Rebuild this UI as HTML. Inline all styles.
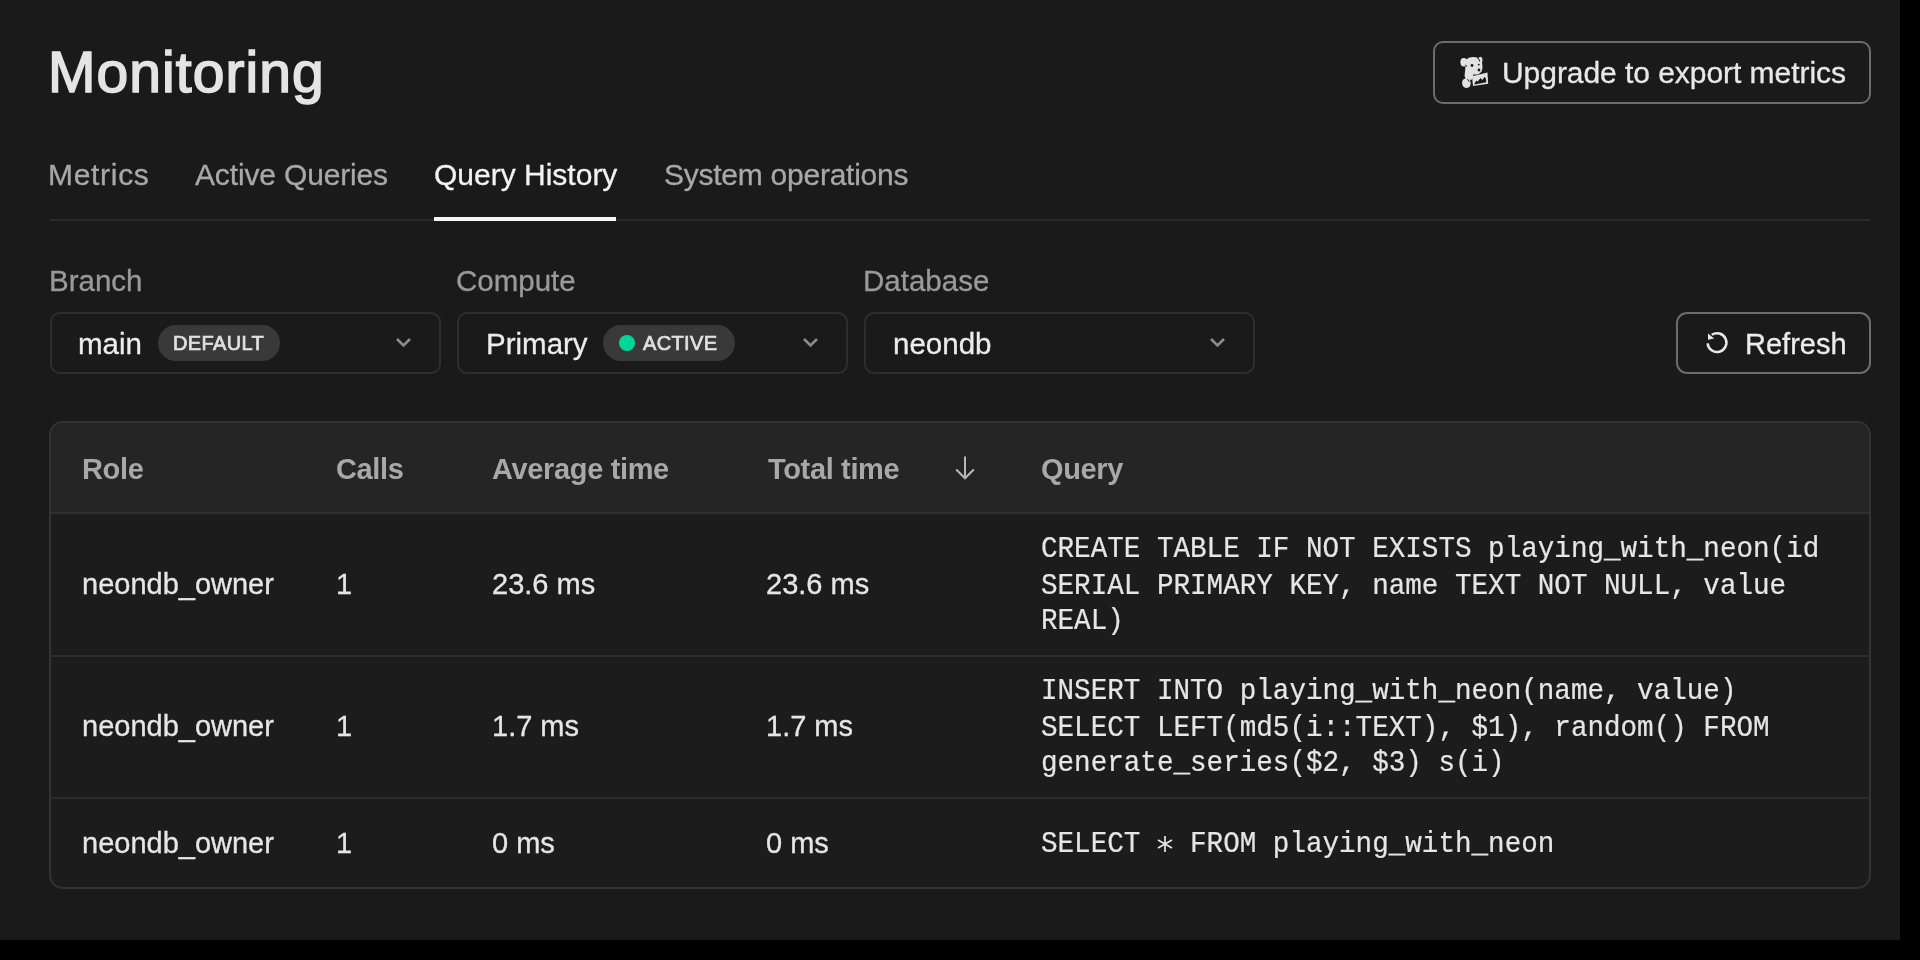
<!DOCTYPE html>
<html><head><meta charset="utf-8">
<style>
*{box-sizing:border-box;margin:0;padding:0}
html,body{width:1920px;height:960px;background:#000;overflow:hidden}
body{font-family:"Liberation Sans",sans-serif;color:#e4e4e4}
.page{position:absolute;left:0;top:0;width:1900px;height:940px;background:#1a1a1a}
.abs{position:absolute;white-space:nowrap;will-change:transform}
.title{left:48px;top:36.8px;font-size:57px;line-height:70px;color:#e4e4e4;letter-spacing:1.05px;-webkit-text-stroke:1.6px #e4e4e4}
.upg{left:1433px;top:41px;width:438px;height:63px;border:2px solid #6c6c6c;border-radius:10px}
.upg .txt{left:67px;top:11.5px;font-size:30px;line-height:36px;color:#e8e8e8;letter-spacing:-0.05px;-webkit-text-stroke:0.3px #e8e8e8}
.tab{top:157px;font-size:30px;line-height:36px;color:#a8a8a8;-webkit-text-stroke:0.3px #a8a8a8}
.tab.on{color:#f2f2f2;-webkit-text-stroke:0.3px #f2f2f2}
.tabline{left:50px;top:219px;width:1820px;height:2px;background:#2b2b2b}
.tabul{left:434px;top:217px;width:182px;height:4px;background:#f5f5f5}
.lbl{top:263px;font-size:29.5px;line-height:36px;color:#9a9a9a;-webkit-text-stroke:0.3px #9a9a9a}
.sel{top:312px;width:391px;height:62px;border:2px solid #2e2e2e;border-radius:10px}
.sel .v{left:27px;top:11.5px;font-size:29.5px;line-height:36px;color:#ececec;-webkit-text-stroke:0.3px #ececec}
.badge{top:11px;height:36px;border-radius:18px;background:#393939}
.btxt{font-size:20px;line-height:24px;color:#e0e0e0;letter-spacing:0.35px;-webkit-text-stroke:0.7px #e0e0e0;top:16.5px}
.chev{left:343px;top:23px}
.refresh{left:1676px;top:312px;width:195px;height:62px;border:2px solid #6c6c6c;border-radius:11px}
.tbl{left:49px;top:421px;width:1822px;height:468px;border:2px solid #333;border-radius:14px;background:#1c1c1c;overflow:hidden}
.thead{left:0;top:0;width:1818px;height:91px;background:#252525;border-bottom:2px solid #2f2f2f}
.th{font-size:29px;letter-spacing:-0.35px;font-weight:bold;line-height:36px;color:#a8a8a8}
.td{font-size:29px;line-height:36px;color:#e6e6e6;-webkit-text-stroke:0.3px #e6e6e6}
.mono{font-family:"Liberation Mono",monospace;font-size:27.6px;line-height:32.7px;color:#e6e6e6;-webkit-text-stroke:0.2px #e6e6e6;white-space:pre;transform:scaleY(1.1);transform-origin:0 0}
</style></head>
<body>
<div class="page">
  <div class="abs title">Monitoring</div>

  <div class="abs upg">
    <svg class="abs" style="left:20px;top:9px" width="40" height="40" viewBox="0 0 40 40">
<g fill="#e2e2e2">
<ellipse cx="8.8" cy="10.2" rx="3.4" ry="4.2"/>
<path d="M10.5 8.5 C13 5 19 4.3 23 6 L25.5 4.8 C27.5 5.2 28 8 27 10.5 C27.5 13 27.8 16 26.8 19 C25.5 21.8 22 23 18.5 22.5 L17.5 26 L12 27 C11 24 10 20 10.2 16 Z"/>
<path d="M10.2 18 L17.5 22 L17.2 27.5 L11.5 28.5 L9.5 24 Z"/>
<path d="M7.2 29.5 C8 26.5 11 25.8 13.5 26.5 C15.5 27.5 16 31 15.3 33.5 C14.6 35.8 11.5 36.5 9.5 35.5 C7.5 34.5 6.8 31.5 7.2 29.5 Z"/>
<path d="M17 24.3 L32.5 20.5 L33.2 31.8 L18 34.1 Z"/>
</g>
<g fill="#1a1a1a">
<circle cx="17" cy="13.5" r="1.4"/>
<circle cx="23.8" cy="12.6" r="0.9"/>
<circle cx="24" cy="18" r="1.4"/>
<path d="M10.2 12.2 C11.5 13 12 14 11.6 15.2 L10.6 14.6 Z"/>
<path d="M12.2 27 C13.5 27.4 14.4 28.5 14.6 30 L13.6 29.6 C13.2 28.6 12.8 28 12.2 27.8 Z"/>
<path d="M19.4 31.8 L21.3 28.5 L22.7 29.4 L25.5 26.1 L27.3 28 L29.7 24.7 L30.8 26.5 L31.4 30.2 L19.6 32.6 Z"/>
<path d="M22.5 5.6 C24 6.5 25 8 25.2 10 L24.4 9.6 C24 8.2 23.4 7 22.3 6.2 Z"/>
</g>
</svg>
    <div class="abs txt">Upgrade to export metrics</div>
  </div>

  <div class="abs tab" style="left:48px;letter-spacing:0.7px">Metrics</div>
  <div class="abs tab" style="left:195px;letter-spacing:-0.15px">Active Queries</div>
  <div class="abs tab on" style="left:434px">Query History</div>
  <div class="abs tab" style="left:664px;letter-spacing:-0.25px">System operations</div>
  <div class="abs tabline"></div>
  <div class="abs tabul"></div>

  <div class="abs lbl" style="left:49px">Branch</div>
  <div class="abs lbl" style="left:456px">Compute</div>
  <div class="abs lbl" style="left:863px">Database</div>

  <div class="abs sel" style="left:50px">
    <div class="abs v" style="left:25.5px">main</div>
    <div class="abs badge" style="left:106px;width:122px"></div>
    <div class="abs btxt" style="left:121px">DEFAULT</div>
    <svg class="abs chev" width="18" height="12" viewBox="0 0 18 12"><path d="M2 2 L8.5 8.5 L15 2" fill="none" stroke="#8c8c8c" stroke-width="2.6"/></svg>
  </div>
  <div class="abs sel" style="left:457px">
    <div class="abs v">Primary</div>
    <div class="abs badge" style="left:144px;width:132px"></div>
    <div class="abs" style="left:160px;top:21px;width:16px;height:16px;border-radius:50%;background:#00d698"></div>
    <div class="abs btxt" style="left:184px">ACTIVE</div>
    <svg class="abs chev" width="18" height="12" viewBox="0 0 18 12"><path d="M2 2 L8.5 8.5 L15 2" fill="none" stroke="#8c8c8c" stroke-width="2.6"/></svg>
  </div>
  <div class="abs sel" style="left:864px">
    <div class="abs v">neondb</div>
    <svg class="abs chev" width="18" height="12" viewBox="0 0 18 12"><path d="M2 2 L8.5 8.5 L15 2" fill="none" stroke="#8c8c8c" stroke-width="2.6"/></svg>
  </div>

  <div class="abs refresh">
    <svg class="abs" style="left:22px;top:12px" width="35" height="34" viewBox="0 0 35 34"><path d="M7.64 17.42 A9.4 9.4 0 1 0 11.74 8.81" fill="none" stroke="#e8e8e8" stroke-width="2.5"/><path d="M8 7.6 L8 13.8 L14.2 12.4 Z" fill="#e8e8e8"/></svg>
    <div class="abs" style="left:67px;top:11.5px;font-size:29px;line-height:36px;color:#ececec;-webkit-text-stroke:0.3px #ececec">Refresh</div>
  </div>

  <div class="abs tbl">
    <div class="abs thead"></div>
  </div>
  <div class="abs th" style="left:82px;top:451px">Role</div>
  <div class="abs th" style="left:336px;top:451px">Calls</div>
  <div class="abs th" style="left:492px;top:451px">Average time</div>
  <div class="abs th" style="left:768px;top:451px">Total time</div>
  <svg class="abs" style="left:953px;top:455px" width="24" height="26" viewBox="0 0 24 26"><path d="M12 1.5 V23 M3.2 14.5 L12 23.3 L20.8 14.5" fill="none" stroke="#b8b8b8" stroke-width="2"/></svg>
  <div class="abs th" style="left:1041px;top:451px">Query</div>

  <div class="abs" style="left:51px;top:655px;width:1818px;height:2px;background:#2c2c2c"></div>
  <div class="abs" style="left:51px;top:797px;width:1818px;height:2px;background:#2c2c2c"></div>

  <div class="abs td" style="left:82px;top:566.2px">neondb_owner</div>
  <div class="abs td" style="left:336px;top:566.2px">1</div>
  <div class="abs td" style="left:492px;top:566.2px">23.6 ms</div>
  <div class="abs td" style="left:766px;top:566.2px">23.6 ms</div>
  <div class="abs mono" style="left:1041px;top:532.3px">CREATE TABLE IF NOT EXISTS playing_with_neon(id
SERIAL PRIMARY KEY, name TEXT NOT NULL, value
REAL)</div>

  <div class="abs td" style="left:82px;top:708.2px">neondb_owner</div>
  <div class="abs td" style="left:336px;top:708.2px">1</div>
  <div class="abs td" style="left:492px;top:708.2px">1.7 ms</div>
  <div class="abs td" style="left:766px;top:708.2px">1.7 ms</div>
  <div class="abs mono" style="left:1041px;top:674px">INSERT INTO playing_with_neon(name, value)
SELECT LEFT(md5(i::TEXT), $1), random() FROM
generate_series($2, $3) s(i)</div>

  <div class="abs td" style="left:82px;top:824.5px">neondb_owner</div>
  <div class="abs td" style="left:336px;top:824.5px">1</div>
  <div class="abs td" style="left:492px;top:824.5px">0 ms</div>
  <div class="abs td" style="left:766px;top:824.5px">0 ms</div>
  <div class="abs mono" style="left:1041px;top:827px">SELECT   FROM playing_with_neon</div>
  <svg class="abs" style="left:1156px;top:835px" width="18" height="18" viewBox="0 0 18 18"><path d="M9 1 V17 M2 5 L16 13 M2 13 L16 5" fill="none" stroke="#e6e6e6" stroke-width="1.7"/></svg>
</div>
</body></html>
